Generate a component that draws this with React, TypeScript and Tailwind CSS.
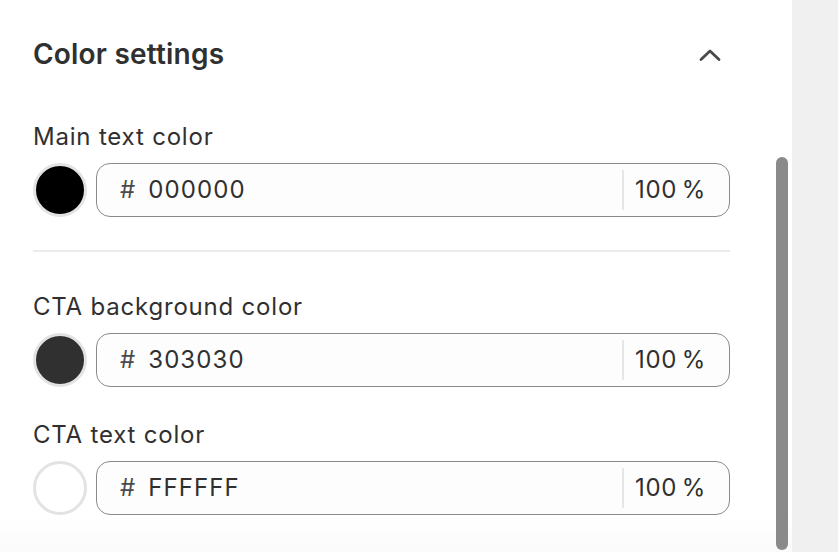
interface ColorFieldProps {
  label: string;
  hex: string;
  swatch: string;
}

function ColorField({ label, hex, swatch }: ColorFieldProps) {
  return (
    <div>
      <div className="text-[24px] leading-[28px] tracking-[0.8px] text-[#303030] pt-[2px]">{label}</div>
      <div className="mt-[12px] flex items-center gap-[9px]">
        <div
          className="w-[54px] h-[54px] rounded-full border-[3px] border-[#e3e3e3] shrink-0"
          style={{ backgroundColor: swatch }}
        />
        <div className="flex-1 h-[54px] flex items-center rounded-[14px] border border-[#8a8a8a] bg-[#fdfdfd]">
          <span className="ml-[23px] text-[24px] text-[#4a4a4a]">#</span>
          <span className="ml-[13px] text-[24px] text-[#303030] tracking-[1.1px]">{hex}</span>
          <div className="ml-auto w-[2px] h-[40px] bg-[#e6e6e6]" />
          <span className="ml-[11px] mr-[23px] text-[24px] text-[#303030] tracking-[0.6px]">100&#8201;%</span>
        </div>
      </div>
    </div>
  );
}

export default function App() {
  return (
    <div className="w-[838px] h-[552px] flex overflow-hidden font-['Inter',sans-serif]">
      <div className="relative w-[792px] h-full bg-white">
        <div className="pl-[33px] w-[730px] pt-[38px]">
          <div className="flex items-center justify-between h-[32px]">
            <h2 className="text-[28px] font-semibold tracking-[0.2px] text-[#303030]">Color settings</h2>
            <svg width="24" height="14" viewBox="0 0 24 14" className="mr-[8px] mt-[2px]" fill="none">
              <polyline points="3,11.5 12,3 21,11.5" stroke="#4a4a4a" strokeWidth="2.8" strokeLinecap="round" strokeLinejoin="round" />
            </svg>
          </div>

          <div className="mt-[51px]">
            <ColorField label="Main text color" hex="000000" swatch="#000000" />
          </div>

          <div className="mt-[33px] h-[2px] bg-[#ebebeb]" />

          <div className="mt-[39px]">
            <ColorField label="CTA background color" hex="303030" swatch="#303030" />
          </div>

          <div className="mt-[32px]">
            <ColorField label="CTA text color" hex="FFFFFF" swatch="#ffffff" />
          </div>
        </div>

        {/* faint bottom fade */}
        <div className="absolute left-0 right-0 bottom-0 h-[36px] bg-gradient-to-b from-transparent to-[#fafafa] pointer-events-none" />

        {/* scrollbar */}
        <div className="absolute left-[776px] top-[157px] w-[12px] h-[393px] rounded-full bg-[#8a8a8a]" />
      </div>
      <div className="flex-1 bg-[#f0f0f0]" />
    </div>
  );
}
